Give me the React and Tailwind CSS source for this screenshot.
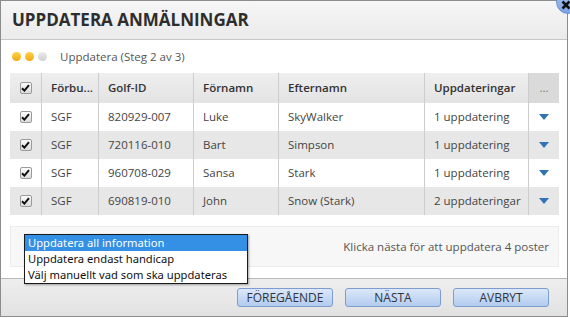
import React from "react";

const rows = [
  ["SGF", "820929-007", "Luke", "SkyWalker", "1 uppdatering"],
  ["SGF", "720116-010", "Bart", "Simpson", "1 uppdatering"],
  ["SGF", "960708-029", "Sansa", "Stark", "1 uppdatering"],
  ["SGF", "690819-010", "John", "Snow (Stark)", "2 uppdateringar"],
];

function Check() {
  return (
    <div className="w-[12px] h-[12px] rounded-[2px] border border-[#9a9a9a] bg-gradient-to-b from-[#fbfbfb] to-[#dcdcdc] flex items-center justify-center">
      <svg width="9" height="8" viewBox="0 0 9 8">
        <path d="M1 4.2 L3.4 6.6 L8 1.2" stroke="#111" strokeWidth="2" fill="none" />
      </svg>
    </div>
  );
}

const grid = "grid grid-cols-[31px_57px_95px_85px_146px_104px_31px]";

export default function App() {
  return (
    <div className="relative w-[570px] h-[318px] bg-white overflow-hidden font-['Open_Sans',sans-serif] text-[11.5px] text-[#444]">
      <div className="w-[568px] h-[317px] border border-[#8c8c8c] flex flex-col">
        <div className="h-[39px] shrink-0 border-b border-[#c6c6c6] bg-gradient-to-b from-[#f6f6f6] to-[#ebebeb] flex items-center pl-[11px]">
          <span className="text-[17px] font-bold text-[#2e2e2e]">UPPDATERA ANMÄLNINGAR</span>
        </div>
        <div className="flex-1 flex flex-col pl-[9px] pr-[8px]">
          <div className="h-[33px] flex items-center">
            <div className="flex gap-[4px] ml-[2px]">
              <div className="w-[9px] h-[9px] rounded-full bg-gradient-to-b from-[#ffd24a] to-[#f0a800]" />
              <div className="w-[9px] h-[9px] rounded-full bg-gradient-to-b from-[#ffd24a] to-[#f0a800]" />
              <div className="w-[9px] h-[9px] rounded-full bg-gradient-to-b from-[#ececec] to-[#cfcfcf]" />
            </div>
            <span className="ml-[13px] text-[#555]">Uppdatera (Steg 2 av 3)</span>
          </div>
          <div className="w-[549px]">
            <div className={grid + " h-[30px] bg-gradient-to-b from-[#efefef] to-[#e3e3e3] font-semibold text-[#333]"}>
              <div className="flex items-center justify-center"><Check /></div>
              <div className="border-l border-[#cdcdcd] flex items-center pl-[9px]">Förbu...</div>
              <div className="border-l border-[#cdcdcd] flex items-center pl-[9px]">Golf-ID</div>
              <div className="border-l border-[#cdcdcd] flex items-center pl-[9px]">Förnamn</div>
              <div className="border-l border-[#cdcdcd] flex items-center pl-[9px]">Efternamn</div>
              <div className="border-l border-[#cdcdcd] flex items-center pl-[9px]">Uppdateringar</div>
              <div className="border-l border-[#cdcdcd] bg-[#dadada] flex items-center justify-center text-[#777] font-normal">...</div>
            </div>
            {rows.map((r, i) => (
              <div key={i} className={grid + " h-[28px] " + (i % 2 === 1 ? "bg-[#e7e7e7]" : "bg-white")}>
                <div className="flex items-center justify-center"><Check /></div>
                {r.map((c, j) => (
                  <div key={j} className="border-l border-[#cdcdcd] flex items-center pl-[9px] whitespace-nowrap">{c}</div>
                ))}
                <div className="border-l border-[#cdcdcd] flex items-center justify-center">
                  <svg width="10" height="6" viewBox="0 0 10 6"><path d="M0 0 L10 0 L5 6 Z" fill="#2f74b8" /></svg>
                </div>
              </div>
            ))}
          </div>
          <div className="mt-[11px] w-[549px] h-[41px] bg-[#f7f7f7] border border-[#ececec] flex items-center justify-end pr-[9px] text-[#555]">
            Klicka nästa för att uppdatera 4 poster
          </div>
        </div>
        <div className="h-[38px] shrink-0 border-t border-[#b8b8b8] bg-gradient-to-b from-[#eeeeee] to-[#e2e2e2] flex items-center justify-end gap-[12px] pr-[18px]">
          {["FÖREGÅENDE", "NÄSTA", "AVBRYT"].map((b) => (
            <div key={b} className="w-[96px] h-[19px] rounded-[3px] border border-[#7d9dd0] bg-gradient-to-b from-[#dce8f9] to-[#b2cbef] flex items-center justify-center text-[12px] text-[#2f3440]">
              {b}
            </div>
          ))}
        </div>
      </div>

      <div className="absolute left-[556px] top-[-10px] w-[24px] h-[24px] rounded-full bg-gradient-to-b from-[#a9c4f0] to-[#7da3e3] border border-[#6b8fd0] flex items-center justify-center">
        <svg width="10" height="10" viewBox="0 0 10 10" className="mt-[6px] mr-[4px]">
          <path d="M1.5 1.5 L8.5 8.5 M8.5 1.5 L1.5 8.5" stroke="#111" strokeWidth="2.6" />
        </svg>
      </div>

      <div className="absolute left-[24px] top-[234px] w-[224px] border border-[#1a1a1a] bg-white shadow-[1px_1px_2px_rgba(0,0,0,0.35)] font-['Noto_Sans',sans-serif] text-[11.2px] text-[#111]">
        <div className="h-[16px] leading-[16px] pl-[3px] bg-[#3390e4] text-white">Uppdatera all information</div>
        <div className="h-[16px] leading-[16px] pl-[3px]">Uppdatera endast handicap</div>
        <div className="h-[16px] leading-[16px] pl-[3px]">Välj manuellt vad som ska uppdateras</div>
      </div>
    </div>
  );
}
